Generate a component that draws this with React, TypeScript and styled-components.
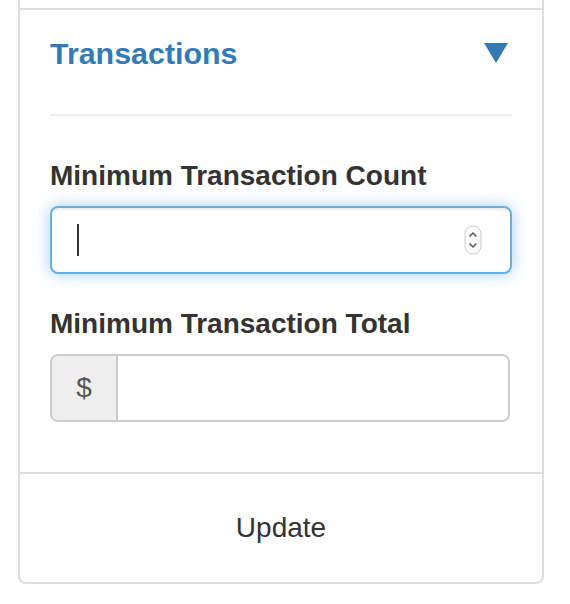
import React from 'react';
import styled, { createGlobalStyle } from 'styled-components';

const GlobalStyle = createGlobalStyle`
  html, body {
    margin: 0;
    padding: 0;
    background: #fff;
    font-family: "Liberation Sans", Arial, sans-serif;
    color: #333;
  }
`;

const Panel = styled.div`
  margin-left: 18px;
  width: 526px;
  box-sizing: border-box;
  border: 2px solid #ddd;
  border-top: none;
  border-radius: 0 0 8px 8px;
`;

const PrevTail = styled.div`
  height: 8px;
`;

const Section = styled.div`
  border-top: 2px solid #ddd;
  padding: 0 30px 30px;
`;

const Header = styled.div`
  display: flex;
  align-items: center;
  justify-content: space-between;
  height: 86px;
  padding-bottom: 18px;
  border-bottom: 2px solid #eee;
  margin-bottom: 40px;
`;

const Title = styled.h4`
  margin: 0;
  font-size: 30.4px;
  font-weight: bold;
  color: #337ab7;
`;

const Caret = styled.svg`
  width: 24px;
  height: 20px;
  margin-right: 4px;
`;

const FormGroup = styled.div`
  margin-bottom: 30px;
  &:last-child { margin-bottom: 20px; }
`;

const Label = styled.label`
  display: block;
  font-size: 28px;
  font-weight: bold;
  line-height: 40px;
  margin-bottom: 10px;
  color: #333;
`;

const NumberField = styled.div<{ focused?: boolean }>`
  display: flex;
  align-items: center;
  height: 68px;
  box-sizing: border-box;
  border: 2px solid ${p => (p.focused ? '#66afe9' : '#ccc')};
  border-radius: 8px;
  padding: 0 28px 0 25px;
  box-shadow: inset 0 2px 2px rgba(0,0,0,.075)${p => (p.focused ? ', 0 0 16px rgba(102,175,233,.6)' : '')};
`;

const TextCaret = styled.span`
  width: 2px;
  height: 32px;
  background: #333;
`;

const BareInput = styled.input`
  flex: 1;
  min-width: 0;
  border: none;
  outline: none;
  background: transparent;
  font: inherit;
  font-size: 28px;
  height: 100%;
  padding: 0;
`;

const Spinner = styled.svg`
  width: 18px;
  height: 30px;
`;

const InputGroup = styled.div`
  display: flex;
  height: 68px;
  margin-right: 2px;
  box-sizing: border-box;
  border: 2px solid #ccc;
  border-radius: 8px;
  overflow: hidden;
  box-shadow: inset 0 2px 2px rgba(0,0,0,.075);
`;

const Addon = styled.span`
  flex: 0 0 64px;
  display: flex;
  align-items: center;
  justify-content: center;
  background: #eee;
  border-right: 2px solid #ccc;
  font-size: 28px;
  color: #555;
`;

const GroupInput = styled.input`
  flex: 1;
  min-width: 0;
  border: none;
  outline: none;
  font: inherit;
  font-size: 28px;
  padding: 0 24px;
`;

const Footer = styled.div`
  border-top: 2px solid #ddd;
  height: 108px;
  display: flex;
  align-items: center;
  justify-content: center;
  font-size: 28px;
  color: #333;
`;

export default function App() {
  return (
    <>
      <GlobalStyle />
      <Panel>
        <PrevTail />
        <Section>
          <Header>
            <Title>Transactions</Title>
            <Caret viewBox="0 0 24 20">
              <polygon points="0,0 24,0 12,20" fill="#337ab7" />
            </Caret>
          </Header>
          <FormGroup>
            <Label>Minimum Transaction Count</Label>
            <NumberField focused>
              <TextCaret />
              <BareInput type="text" />
              <Spinner viewBox="0 0 18 30">
                <rect x="1" y="1" width="16" height="28" rx="8" fill="#fff" stroke="#c8c8c8" strokeWidth="1" />
                <polyline points="5.5,11.5 9,8 12.5,11.5" fill="none" stroke="#555" strokeWidth="1.5" />
                <polyline points="5.5,18.5 9,22 12.5,18.5" fill="none" stroke="#555" strokeWidth="1.5" />
              </Spinner>
            </NumberField>
          </FormGroup>
          <FormGroup>
            <Label>Minimum Transaction Total</Label>
            <InputGroup>
              <Addon>$</Addon>
              <GroupInput type="text" />
            </InputGroup>
          </FormGroup>
        </Section>
        <Footer>Update</Footer>
      </Panel>
    </>
  );
}
